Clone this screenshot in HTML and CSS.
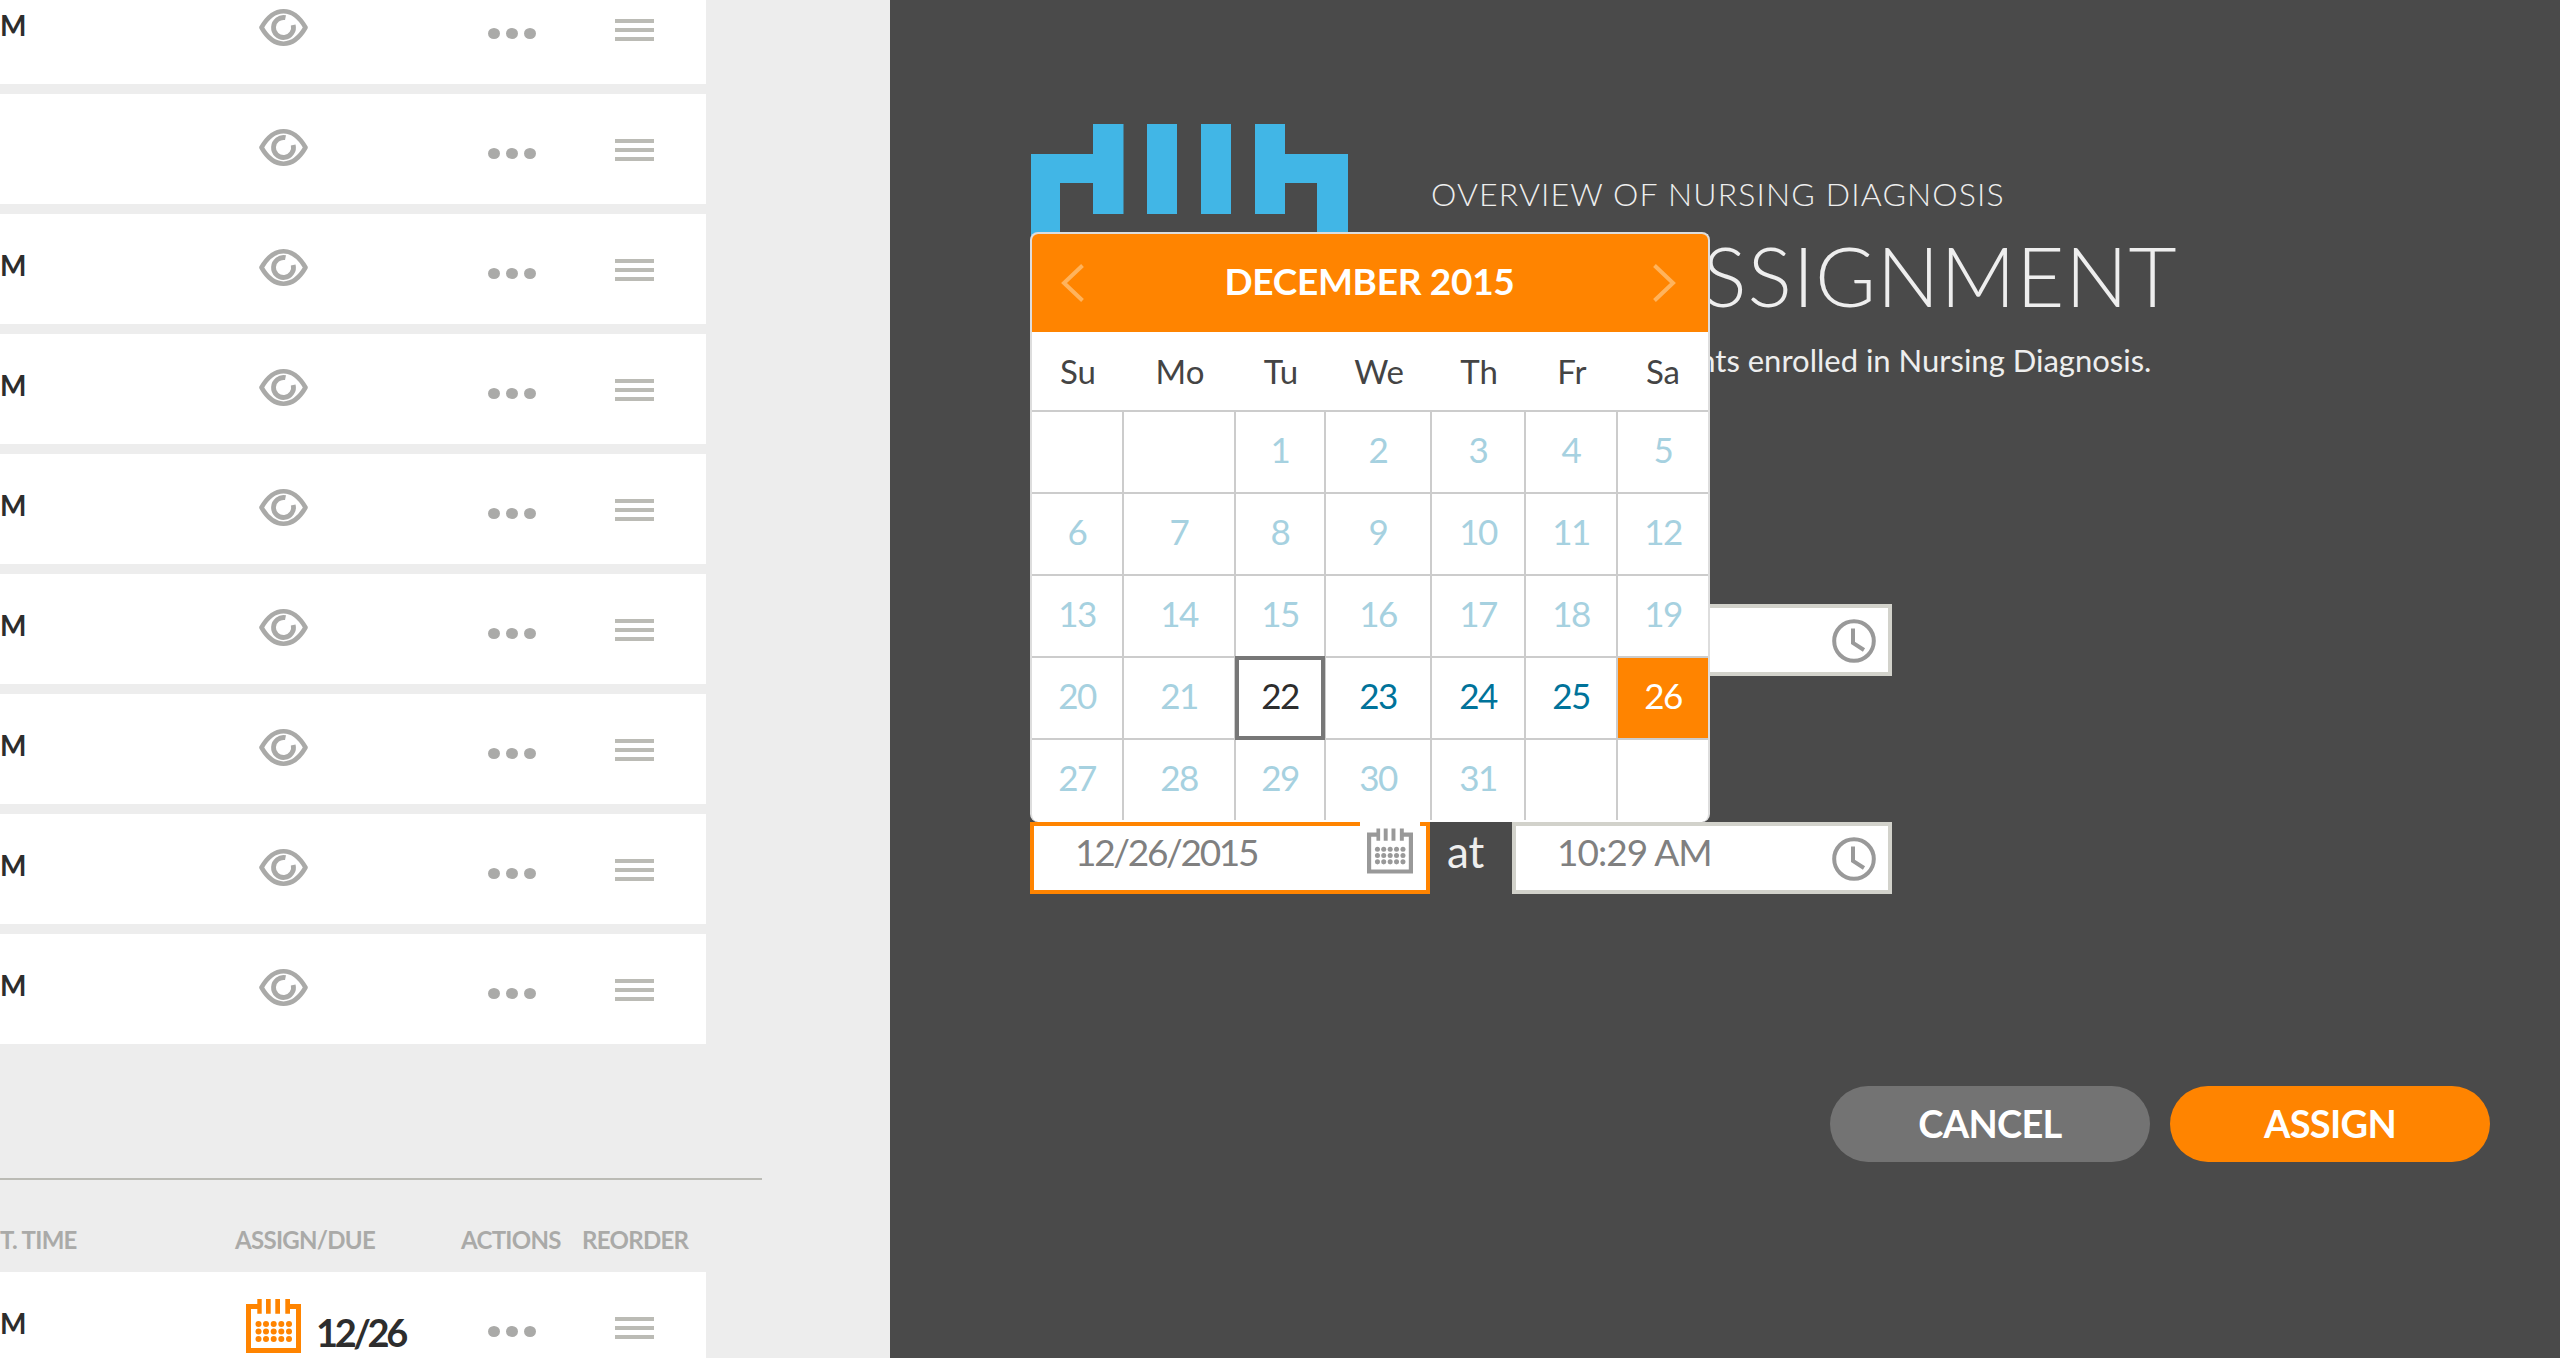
FILE: index.html
```html
<!DOCTYPE html>
<html lang="en">
<head>
    <meta charset="UTF-8">
    <meta name="viewport" content="width=device-width, initial-scale=1.0">
    <title>New Assignment</title>
    <link rel="stylesheet" href="styles.css">
</head>
<body>
    <svg class="icon-defs" width="0" height="0">
        <symbol id="eye" viewBox="0 0 49 37">
            <path d="M2.500 18.500C8 9 15.500 2.300 24.500 2.300S41 9 46.500 18.500C41 28 33.500 34.700 24.500 34.700S8 28 2.500 18.500Z" fill="none" stroke="currentColor" stroke-width="4.600" stroke-linejoin="round"/>
            <path d="M26.500 8.700A10 10 0 1 0 34.200 16" fill="none" stroke="currentColor" stroke-width="4.800"/>
        </symbol>
        <symbol id="cal" viewBox="0 0 55 54">
            <path d="M13.500 7.500H2.500V51.500H52.500V7.500H41.500" fill="none" stroke="currentColor" stroke-width="5"/>
            <path d="M11.300 0h4.400v14.700h-4.400zM20 0h4.700v14.700H20zM29.300 0H34v14.700h-4.700zM39.300 0H44v14.700h-4.700z" fill="currentColor"/>
            <g fill="currentColor">
                <circle cx="12.500" cy="25" r="3"/><circle cx="20" cy="25" r="3"/><circle cx="27.700" cy="25" r="3"/><circle cx="35.300" cy="25" r="3"/><circle cx="43" cy="25" r="3"/>
                <circle cx="12.500" cy="32.400" r="3"/><circle cx="20" cy="32.400" r="3"/><circle cx="27.700" cy="32.400" r="3"/><circle cx="35.300" cy="32.400" r="3"/><circle cx="43" cy="32.400" r="3"/>
                <circle cx="12.500" cy="40" r="3"/><circle cx="20" cy="40" r="3"/><circle cx="27.700" cy="40" r="3"/><circle cx="35.300" cy="40" r="3"/><circle cx="43" cy="40" r="3"/>
            </g>
        </symbol>
        <symbol id="clock" viewBox="0 0 44 44">
            <circle cx="22" cy="22" r="19.800" fill="none" stroke="currentColor" stroke-width="4"/>
            <path d="M21 9.500V24L32 31" fill="none" stroke="currentColor" stroke-width="4"/>
        </symbol>
    </svg>

    <div class="page">
        <section class="list-panel">
            <div class="rows">
                <div class="row"><span class="row-time">M</span><div class="row-assign"><svg class="eye"><use href="#eye"/></svg></div><div class="row-actions"><i></i><i></i><i></i></div><div class="row-reorder"><i></i><i></i><i></i></div></div>
                <div class="row"><span class="row-time"></span><div class="row-assign"><svg class="eye"><use href="#eye"/></svg></div><div class="row-actions"><i></i><i></i><i></i></div><div class="row-reorder"><i></i><i></i><i></i></div></div>
                <div class="row"><span class="row-time">M</span><div class="row-assign"><svg class="eye"><use href="#eye"/></svg></div><div class="row-actions"><i></i><i></i><i></i></div><div class="row-reorder"><i></i><i></i><i></i></div></div>
                <div class="row"><span class="row-time">M</span><div class="row-assign"><svg class="eye"><use href="#eye"/></svg></div><div class="row-actions"><i></i><i></i><i></i></div><div class="row-reorder"><i></i><i></i><i></i></div></div>
                <div class="row"><span class="row-time">M</span><div class="row-assign"><svg class="eye"><use href="#eye"/></svg></div><div class="row-actions"><i></i><i></i><i></i></div><div class="row-reorder"><i></i><i></i><i></i></div></div>
                <div class="row"><span class="row-time">M</span><div class="row-assign"><svg class="eye"><use href="#eye"/></svg></div><div class="row-actions"><i></i><i></i><i></i></div><div class="row-reorder"><i></i><i></i><i></i></div></div>
                <div class="row"><span class="row-time">M</span><div class="row-assign"><svg class="eye"><use href="#eye"/></svg></div><div class="row-actions"><i></i><i></i><i></i></div><div class="row-reorder"><i></i><i></i><i></i></div></div>
                <div class="row"><span class="row-time">M</span><div class="row-assign"><svg class="eye"><use href="#eye"/></svg></div><div class="row-actions"><i></i><i></i><i></i></div><div class="row-reorder"><i></i><i></i><i></i></div></div>
                <div class="row"><span class="row-time">M</span><div class="row-assign"><svg class="eye"><use href="#eye"/></svg></div><div class="row-actions"><i></i><i></i><i></i></div><div class="row-reorder"><i></i><i></i><i></i></div></div>
            </div>

            <div class="divider"></div>

            <div class="list-head">
                <span class="head-time">T. TIME</span>
                <span class="head-assign">ASSIGN/DUE</span>
                <span class="head-actions">ACTIONS</span>
                <span class="head-reorder">REORDER</span>
            </div>

            <div class="row">
                <span class="row-time">M</span>
                <div class="row-assign row-due">
                    <svg class="due-icon"><use href="#cal"/></svg>
                    <span class="due-date">12/26</span>
                </div>
                <div class="row-actions"><i></i><i></i><i></i></div>
                <div class="row-reorder"><i></i><i></i><i></i></div>
            </div>
        </section>

        <section class="assign-panel">
            <header class="assign-head">
                <svg class="logo" width="317" height="136" viewBox="0 0 317 136">
                    <path d="M62 0H92.500V90H62V59H29V136H0V30H62ZM116 0H146V90H116ZM170 0H200V90H170ZM224 0H254V30H317V136H286V59H254V90H224Z" fill="#41b6e6"/>
                </svg>
                <div class="assign-title">
                    <p class="course-name">OVERVIEW OF NURSING DIAGNOSIS</p>
                    <h1>NEW ASSIGNMENT</h1>
                    <p class="assign-note">Assign it to all students enrolled in Nursing Diagnosis.</p>
                </div>
            </header>

            <div class="date-row">
                <div class="field field-date"></div>
                <span class="at"></span>
                <div class="field field-time"><span></span><svg class="field-icon"><use href="#clock"/></svg></div>
            </div>
            <div class="date-row">
                <div class="field field-date field-active">
                    <span>12/26/2015</span>
                    <div class="field-notch"><svg class="field-icon-cal"><use href="#cal"/></svg></div>
                </div>
                <span class="at">at</span>
                <div class="field field-time"><span>10:29 AM</span><svg class="field-icon"><use href="#clock"/></svg></div>
            </div>

            <div class="assign-buttons">
                <button class="btn btn-cancel">CANCEL</button>
                <button class="btn btn-assign">ASSIGN</button>
            </div>

            <div class="calendar">
                <div class="cal-head">
                    <svg class="cal-arrow" width="24" height="38" viewBox="0 0 24 38"><path d="M21.500 1.500L3 19L21.500 36.500" fill="none" stroke="#ffb35c" stroke-width="4"/></svg>
                    <span class="cal-month">DECEMBER 2015</span>
                    <svg class="cal-arrow" width="24" height="38" viewBox="0 0 24 38"><path d="M2.500 1.500L21 19L2.500 36.500" fill="none" stroke="#ffb35c" stroke-width="4"/></svg>
                </div>
                <div class="cal-grid">
                    <div class="cal-day-name">Su</div><div class="cal-day-name">Mo</div><div class="cal-day-name">Tu</div><div class="cal-day-name">We</div><div class="cal-day-name">Th</div><div class="cal-day-name">Fr</div><div class="cal-day-name">Sa</div>
                    <div class="cal-cell"></div><div class="cal-cell"></div><div class="cal-cell">1</div><div class="cal-cell">2</div><div class="cal-cell">3</div><div class="cal-cell">4</div><div class="cal-cell">5</div>
                    <div class="cal-cell">6</div><div class="cal-cell">7</div><div class="cal-cell">8</div><div class="cal-cell">9</div><div class="cal-cell">10</div><div class="cal-cell">11</div><div class="cal-cell">12</div>
                    <div class="cal-cell">13</div><div class="cal-cell">14</div><div class="cal-cell">15</div><div class="cal-cell">16</div><div class="cal-cell">17</div><div class="cal-cell">18</div><div class="cal-cell">19</div>
                    <div class="cal-cell">20</div><div class="cal-cell">21</div><div class="cal-cell cal-today">22</div><div class="cal-cell cal-open">23</div><div class="cal-cell cal-open">24</div><div class="cal-cell cal-open">25</div><div class="cal-cell cal-picked">26</div>
                    <div class="cal-cell cal-last">27</div><div class="cal-cell cal-last">28</div><div class="cal-cell cal-last">29</div><div class="cal-cell cal-last">30</div><div class="cal-cell cal-last">31</div><div class="cal-cell cal-last"></div><div class="cal-cell cal-last"></div>
                </div>
            </div>
        </section>
    </div>
</body>
</html>
```

FILE: styles.css
```css
* {
    box-sizing: border-box;
}
html, body {
    margin: 0;
    height: 100%;
    overflow: hidden;
}
body {
    font-family: Lato, "Noto Sans", sans-serif;
    background-color: #4a4a4a;
}
.icon-defs {
    display: block;
    height: 0;
}
.page {
    display: flex;
    height: 1358px;
}

/* left list */
.list-panel {
    width: 890px;
    flex-shrink: 0;
    height: 1358px;
    overflow: hidden;
    background-color: #ededed;
}
.rows {
    display: flex;
    flex-direction: column;
    gap: 10px;
    margin-top: -26px;
}
.row {
    display: flex;
    align-items: flex-start;
    width: 706px;
    height: 110px;
    background-color: #fff;
}
.row-time {
    width: 246px;
    margin-top: 34px;
    font-size: 28px;
    line-height: 35px;
    font-weight: 700;
    color: #2d2d2d;
}
.row-assign {
    width: 242px;
    padding-left: 13px;
}
.eye {
    display: block;
    width: 49px;
    height: 37px;
    margin-top: 35px;
    color: #aaaaa8;
}
.row-actions {
    display: flex;
    gap: 6px;
    width: 127px;
    margin-top: 54px;
}
.row-actions i {
    width: 12px;
    height: 11px;
    border-radius: 50%;
    background-color: #aaaaa8;
}
.row-reorder {
    display: flex;
    flex-direction: column;
    gap: 5px;
    width: 39px;
    margin-top: 45px;
}
.row-reorder i {
    height: 4px;
    background-color: #bbbbb5;
}
.row-due {
    display: flex;
    align-items: flex-start;
    gap: 15px;
    padding-left: 0;
}
.due-icon {
    width: 55px;
    height: 54px;
    margin-top: 27px;
    color: #ff8400;
}
.due-date {
    margin-top: 37px;
    font-size: 38px;
    line-height: 46px;
    font-weight: 700;
    letter-spacing: -3.400px;
    color: #2d2d2d;
}
.divider {
    width: 762px;
    height: 2px;
    margin-top: 134px;
    background-color: #bbbbb5;
}
.list-head {
    display: flex;
    height: 92px;
    padding-top: 46px;
    font-size: 24px;
    line-height: 28px;
    font-weight: 700;
    letter-spacing: -0.700px;
    color: #aaaaa8;
}
.head-time { width: 235px; }
.head-assign { width: 226px; }
.head-actions { width: 121px; }

/* assignment panel */
.assign-panel {
    position: relative;
    flex: 1;
    padding: 124px 70px 0 140px;
}
.assign-head {
    display: flex;
    align-items: flex-start;
    gap: 83px;
    height: 480px;
    color: #eee;
}
.logo {
    flex-shrink: 0;
    margin-left: 1px;
}
.assign-title {
    padding-top: 50px;
}
.course-name {
    margin: 0;
    font-size: 32px;
    line-height: 40px;
    font-weight: 300;
    letter-spacing: 1.150px;
    white-space: nowrap;
}
.assign-title h1 {
    margin: 16px 0 0;
    font-size: 83px;
    line-height: 90px;
    font-weight: 300;
    letter-spacing: 0.750px;
    white-space: nowrap;
}
.assign-note {
    margin: 21px 0 0 -6px;
    font-size: 31px;
    line-height: 38px;
    font-weight: 400;
    white-space: nowrap;
}
.date-row {
    display: flex;
    align-items: flex-start;
    height: 72px;
}
.date-row + .date-row {
    margin-top: 146px;
}
.field {
    display: flex;
    align-items: center;
    position: relative;
    height: 72px;
    background-color: #fff;
    border: 4px solid #d2d2cb;
    font-size: 37px;
    color: #808080;
}
.field span {
    flex: 1;
    line-height: 60px;
    margin-top: -12px;
}
.field-date {
    width: 400px;
    padding-left: 41px;
    letter-spacing: -2.300px;
}
.field-active {
    border-color: #ff8400;
}
.field-time {
    width: 380px;
    padding: 0 12px 0 41px;
    letter-spacing: -1px;
}
.at {
    width: 82px;
    padding-left: 17px;
    font-size: 44px;
    line-height: 58px;
    color: #eee;
}
.field-icon {
    width: 44px;
    height: 44px;
    margin-top: 2px;
    color: #999;
}
.field-icon-cal {
    display: block;
    width: 46px;
    height: 46px;
    color: #999;
}
.field-notch {
    position: absolute;
    top: -4px;
    right: 6px;
    width: 60px;
    height: 60px;
    padding: 6px 0 0 7px;
    background-color: #fff;
}
.assign-buttons {
    display: flex;
    justify-content: flex-end;
    gap: 20px;
    margin-top: 192px;
}
.btn {
    width: 320px;
    height: 76px;
    padding-bottom: 3px;
    border: none;
    border-radius: 38px;
    font-family: inherit;
    font-size: 38px;
    font-weight: 700;
    letter-spacing: -0.700px;
    color: #fff;
}
.btn-cancel {
    background-color: #737373;
}
.btn-assign {
    background-color: #ff8400;
}

/* calendar popup */
.calendar {
    position: absolute;
    top: 232px;
    left: 140px;
    width: 680px;
    height: 590px;
    overflow: hidden;
    background-color: #fff;
    border: 2px solid #ddd;
    border-bottom-width: 0;
    border-radius: 8px;
}
.cal-head {
    display: flex;
    align-items: center;
    justify-content: space-between;
    height: 98px;
    padding: 0 32px 0 29px;
    background-color: #ff8400;
    color: #fff;
}
.cal-month {
    margin: -6px 0 0 2px;
    font-size: 37px;
    font-weight: 700;
    letter-spacing: -0.300px;
}
.cal-grid {
    display: grid;
    grid-template-columns: 92px 112px 90px 106px 94px 92px 90px;
}
.cal-day-name {
    height: 80px;
    border-bottom: 2px solid #ccc;
    text-align: center;
    font-size: 33px;
    line-height: 78px;
    color: #444;
}
.cal-cell {
    position: relative;
    height: 82px;
    border-right: 2px solid #ccc;
    border-bottom: 2px solid #ccc;
    background-clip: padding-box;
    text-align: center;
    font-size: 35px;
    line-height: 74px;
    letter-spacing: -1.500px;
    color: #a6d1e0;
}
.cal-cell:nth-child(7n) {
    border-right: none;
}
.cal-last {
    height: 80px;
    border-bottom: none;
}
.cal-open {
    color: #00739a;
}
.cal-today {
    color: #2d2d2d;
}
.cal-today::after {
    content: "";
    position: absolute;
    top: -2px;
    left: -1px;
    right: -1px;
    bottom: -2px;
    border: 4px solid #777;
}
.cal-picked {
    background-color: #ff8400;
    color: #fff;
}
```
